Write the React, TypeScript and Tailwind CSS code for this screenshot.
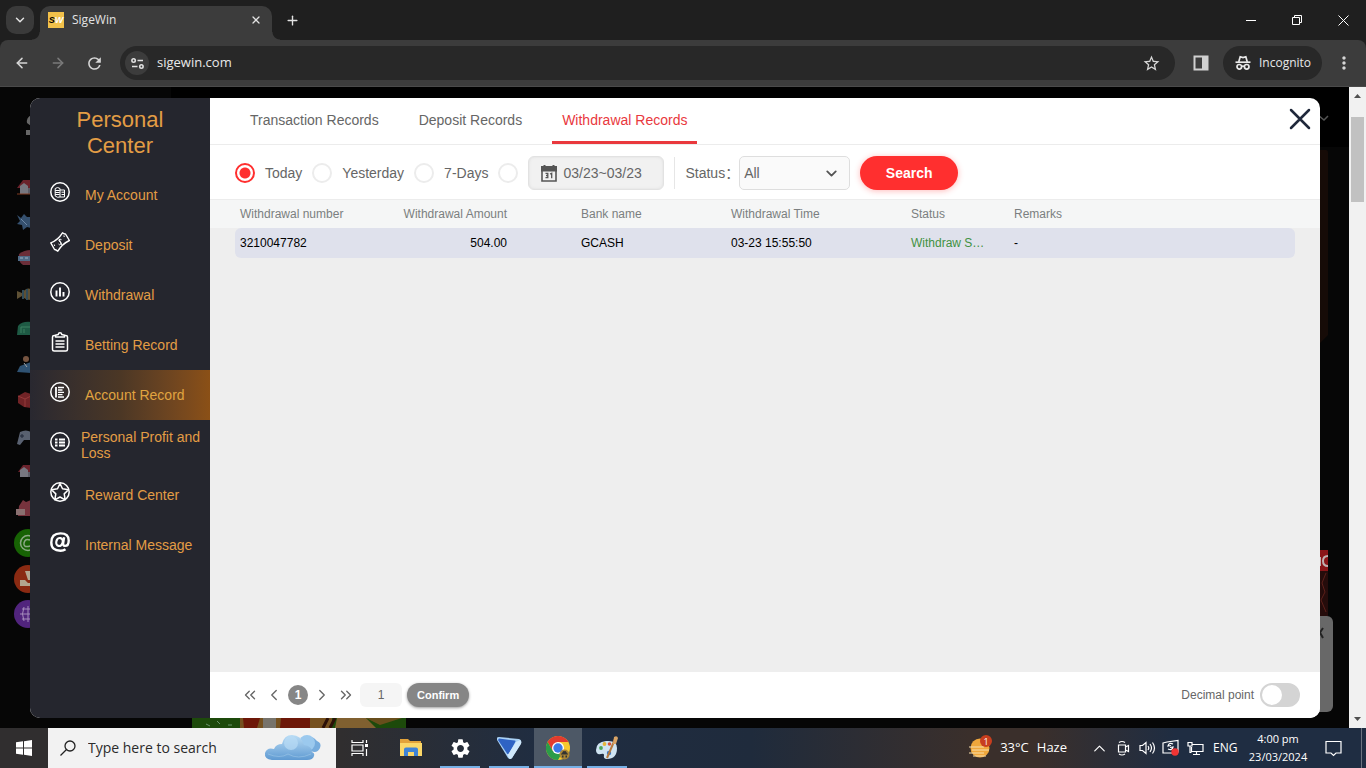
import { useState } from 'react'
import type { ReactNode } from 'react'
import { ArrowLeft, ArrowRight, ChevronDown, ChevronLeft, ChevronRight, ChevronsLeft, ChevronsRight, ChevronUp, Plus, X } from 'lucide-react'
import { MdMoreVert, MdRefresh, MdSettings, MdStarBorder } from 'react-icons/md'

interface WithdrawalRecord {
  number: string
  amount: string
  bank: string
  time: string
  status: string
  remarks: string
}

const RECORDS: WithdrawalRecord[] = [
  {
    number: '3210047782',
    amount: '504.00',
    bank: 'GCASH',
    time: '03-23 15:55:50',
    status: 'Withdraw S…',
    remarks: '-',
  },
]

const TABS = ['Transaction Records', 'Deposit Records', 'Withdrawal Records']
const RANGES = ['Today', 'Yesterday', '7-Days']

/* ---------- Browser chrome ---------- */

function TitleBar() {
  return (
    <div className="flex h-10 shrink-0 items-center bg-[#1f1f1f] pl-1.5 text-[#e3e3e3]">
      <button aria-label="Search tabs" className="flex size-7 items-center justify-center rounded-[10px] bg-[#3a3a3a]">
        <ChevronDown size={14} strokeWidth={2.5} />
      </button>
      <div className="relative ml-1.5 flex h-[34px] w-[232px] items-center self-end rounded-t-[10px] bg-[#3c3c3c] pr-2.5 pb-1.5 pl-2">
        <span className="absolute bottom-0 -left-2 size-2 bg-[radial-gradient(circle_at_0_0,#1f1f1f_7px,#3c3c3c_8px)]" />
        <span className="absolute -right-2 bottom-0 size-2 bg-[radial-gradient(circle_at_100%_0,#1f1f1f_7px,#3c3c3c_8px)]" />
        <span className="flex size-4 items-center justify-center bg-[#f2c14a] font-['Liberation_Sans'] text-[9px] leading-none font-bold text-black italic">
          S<span className="text-white">W</span>
        </span>
        <span className="ml-2 flex-1 text-xs">SigeWin</span>
        <button aria-label="Close tab">
          <X size={12} strokeWidth={2.5} />
        </button>
      </div>
      <button aria-label="New tab" className="ml-1.5 flex size-7 items-center justify-center">
        <Plus size={15} strokeWidth={2.2} />
      </button>
      <div className="ml-auto flex self-stretch">
        <button aria-label="Minimize" className="flex w-[46px] items-center justify-center">
          <svg width="10" height="10" stroke="#fff" fill="none"><path d="M0 5.5h10" /></svg>
        </button>
        <button aria-label="Restore" className="flex w-[46px] items-center justify-center">
          <svg width="10" height="10" stroke="#fff" fill="none"><path d="M.5 2.5h7v7h-7zM2.500 2.500v-2h7v7h-2" /></svg>
        </button>
        <button aria-label="Close" className="flex w-[46px] items-center justify-center">
          <svg width="11" height="11" stroke="#fff" fill="none"><path d="M.5.5l10 10M10.500.5l-10 10" /></svg>
        </button>
      </div>
    </div>
  )
}

function IncognitoIcon() {
  return (
    <svg width="16" height="16" viewBox="0 0 16 16" fill="none" stroke="#e8e8e8" strokeWidth="1.700">
      <path d="M0.500 7.200h15" />
      <path d="M3.700 7L5.200 1.800 8 2.500l2.800-.7L12.300 7" />
      <circle cx="4.300" cy="11.800" r="2.300" />
      <circle cx="11.700" cy="11.800" r="2.300" />
      <path d="M6.500 11.400q1.500-.8 3 0" />
    </svg>
  )
}

function Toolbar() {
  return (
    <div className="shrink-0 bg-[#1f1f1f]">
      <div className="flex h-[47px] items-center rounded-t-lg border-b border-[#4a4a4a] bg-[#3c3c3c] px-1 text-[#d6d6d6]">
        <button aria-label="Back" className="flex w-9 justify-center"><ArrowLeft size={16} strokeWidth={2.3} /></button>
        <button aria-label="Forward" className="flex w-9 justify-center text-[#7a7a7a]"><ArrowRight size={16} strokeWidth={2.3} /></button>
        <button aria-label="Reload" className="flex w-9 justify-center"><MdRefresh size={19} /></button>
        <div className="ml-2 flex h-[34px] flex-1 items-center rounded-full bg-[#282828] pr-3.5 pl-[5px]">
          <button aria-label="Site information" className="flex size-6 items-center justify-center rounded-full bg-[#3c3c3c]">
            <svg width="13" height="11" viewBox="0 0 13 11" fill="none" stroke="#e0e0e0" strokeWidth="1.600">
              <circle cx="2.600" cy="2.500" r="1.700" />
              <path d="M6.500 2.500H12M1 8.500h5.500" />
              <circle cx="10.400" cy="8.500" r="1.700" />
            </svg>
          </button>
          <input
            aria-label="Address"
            defaultValue="sigewin.com"
            className="ml-2 min-w-0 flex-1 bg-transparent text-[13px] text-[#e8e8e8] outline-none"
          />
          <button aria-label="Bookmark"><MdStarBorder size={19} /></button>
        </div>
        <button aria-label="Side panel" className="ml-2 flex w-9 justify-center">
          <svg width="16" height="16"><path d="M1.500 1.500h13v13h-13z" fill="none" stroke="#d0d0d0" strokeWidth="2" /><path d="M9 1h6v14H9z" fill="#d0d0d0" /></svg>
        </button>
        <button className="ml-1 flex h-[34px] w-[99px] items-center gap-2 rounded-full bg-[#282828] pl-3 text-xs text-[#e8e8e8]">
          <IncognitoIcon />
          Incognito
        </button>
        <button aria-label="Menu" className="ml-1 flex w-9 justify-center"><MdMoreVert size={20} /></button>
      </div>
    </div>
  )
}

function Scrollbar() {
  return (
    <div className="flex w-[17px] shrink-0 flex-col items-center bg-[#f1f1f1]">
      <svg width="17" height="17"><path d="M5 11l3.500-4 3.500 4z" fill="#505050" /></svg>
      <div className="mt-[13px] h-[85px] w-[13px] bg-[#c1c1c1]" />
      <svg className="mt-auto" width="17" height="17"><path d="M5 6l3.500 4L12 6z" fill="#505050" /></svg>
    </div>
  )
}

/* ---------- Dimmed site behind the dialog ---------- */

function Backdrop() {
  return (
    <div aria-hidden="true" className="absolute inset-0 overflow-hidden bg-[#060606]">
      <div className="absolute top-0 right-0 left-[171px] h-[60px] bg-black" />
      <svg className="absolute top-0 left-0" width="60" height="560" viewBox="0 87 60 560">
        <path d="M31 115q-5 3-4 8l4 3zM26 130h5v5h-5z" fill="#666" />
        {/* house */}
        <path d="M17 188l6-8h8v8z" fill="#6a222b" />
        <path d="M20 186l4-3 4 3v8h-8z" fill="#777780" />
        <path d="M28 188h3v6h-3z" fill="#5c5c66" />
        <path d="M17 194h14" stroke="#803a20" />
        {/* dragon */}
        <path d="M17 215l4 3 3-4 3 3h4v11l-4-1-4 3-1-5-5-1 3-3z" fill="#35506e" />
        <path d="M21 219l6 6" stroke="#6c86a4" />
        {/* slot machine */}
        <path d="M19 254q5-4 12-4v15h-8q-5-3-4-11z" fill="#6b2e39" />
        <path d="M18 256h13v5H18z" fill="#506b87" />
        <path d="M20 258h3m2 0h3" stroke="#9eb3c6" />
        {/* fish */}
        <path d="M17 291l5 2q4-6 9-4v11q-6 0-9-4l-5 3z" fill="#5e5034" />
        <path d="M23 290v9m4-10v11" stroke="#314b58" strokeWidth="2" />
        {/* cards */}
        <path d="M18 326q4-5 13-4v13H17z" fill="#1e5a44" />
        <path d="M21 333v-6h9M24 333v-4" stroke="#3c8060" fill="none" />
        {/* dealer */}
        <circle cx="26" cy="359" r="3" fill="#765440" />
        <path d="M17 372l3-6 11-4v11z" fill="#2f5272" />
        <path d="M24 363l3 4" stroke="#a3a3a3" />
        {/* dice */}
        <path d="M18 396l7-4 6 2v14l-7-1-6-4z" fill="#702326" />
        <path d="M18 396l7 3v8m0-8l6-3" stroke="#943a3a" fill="none" />
        {/* gamepad */}
        <path d="M17 444l3-12q6-3 11 0v8h-7l-4 5z" fill="#596170" />
        <path d="M20 436h4m-2-2v4" stroke="#202838" />
        {/* house */}
        <path d="M18 472l5-7h8v7z" fill="#6a222b" />
        <path d="M20 470l4-3 4 3v7h-8z" fill="#777780" />
        <path d="M28 472h3v5h-3z" fill="#5c5c66" />
        {/* gifts */}
        <path d="M19 506l4-6 3 2 5-2v16H18z" fill="#77333d" />
        <path d="M16 509h9v6h-9z" fill="#8a7070" />
        <circle cx="28" cy="543" r="14" fill="#176204" />
        <circle cx="28" cy="543" r="7.500" fill="none" stroke="#8aa884" strokeWidth="1.500" />
        <path d="M30 540q-5-2-6 3t6 3" fill="none" stroke="#8aa884" strokeWidth="1.500" />
        <circle cx="28" cy="579" r="14" fill="#8a2a12" />
        <path d="M20 580h5l3 3h3v3H20zM25 571h6v9h-3z" fill="#b3a68f" />
        <circle cx="28" cy="614" r="14" fill="#51247d" />
        <path d="M20 614h11M22 609h9M22 619h9M24 607q-3 7 0 14M28 606v16" stroke="#a58bbc" fill="none" />
      </svg>
      <svg className="absolute top-0 right-0" width="49" height="641" viewBox="1300 87 49 641">
        <path d="M1318 115l6 5 4-4" stroke="#555" strokeWidth="1.500" fill="none" />
        <path d="M1300 150h26q2 0 2 3v182l-8 8h-20z" fill="#160b07" />
        <path d="M1300 550h28v21h-28z" fill="#8a1518" />
        <path d="M1328 556q-5 0-5 5t5 5M1320 557v9" stroke="#bfb0b0" strokeWidth="2" fill="none" />
        <path d="M1300 571h28v45h-28z" fill="#250c0b" />
        <path d="M1326 573l-4 10 3 9-4 8 5 12" stroke="#5b1f19" fill="none" />
        <rect x="1300" y="616" width="33" height="96" rx="6" fill="#686868" />
        <path d="M1318 629l5 9m0-10l-6 9" stroke="#222" strokeWidth="2" />
      </svg>
      <svg className="absolute bottom-0 left-[192px]" width="214" height="10">
        <path d="M0 0h214v10H0z" fill="#1d4a0b" />
        <path d="M14 6l4 2M25 3l3 3M36 7h4" stroke="#6b936b" />
        <path d="M48 0h92v10H48z" fill="#75501f" />
        <path d="M51 0h17l-3 10H52zM89 0h29v10H88z" fill="#6d1708" />
        <path d="M71 0h13v10H71z" fill="#77736b" />
        <path d="M136 0l-5 10m12-10l-5 10" stroke="#2b1008" strokeWidth="3" />
        <path d="M145 0h29l10 10h-41z" fill="#806030" />
        <path d="M174 0h36l-22 7z" fill="#684e1c" />
      </svg>
    </div>
  )
}

/* ---------- Sidebar ---------- */

function RingIcon({ children }: { children?: ReactNode }) {
  return (
    <svg width="20" height="20" viewBox="0 0 20 20" fill="none" stroke="#fff">
      <circle cx="10" cy="10" r="9.200" strokeWidth="1.500" />
      {children}
    </svg>
  )
}

const MENU: { label: string; icon: ReactNode }[] = [
  {
    label: 'My Account',
    icon: (
      <RingIcon>
        <path d="M5.200 14V6.500q2.400-2 4.800 0V15q-2.500 1-4.800-1zM5.200 8.500h4.500M5.200 10.500h4.500M5.200 12.500h4.500M10 8h4.500v7H10M11.500 10.200h2.500M11.500 12.500h2.500" />
      </RingIcon>
    ),
  },
  {
    label: 'Deposit',
    icon: (
      <svg width="20" height="20" viewBox="0 0 20 20" fill="none" stroke="#fff" strokeWidth="1.400" strokeLinejoin="round">
        <path d="M.8 10.800Q8 8 12.500.8q1.500 1.500 3 1.200l3.900 6.500Q12 12 7.800 19.200 6 17.500 4.500 17.500z" />
        <path d="M11.500 7.700q-1.500-1-2.400.2t1.200 2 .5 2.200-2.300-.1M9 6.700l2.600 6.200" strokeWidth="1" />
        <path d="M13.300 4l1.600.3M4.300 12.500l.4 1.500" strokeWidth="1" />
      </svg>
    ),
  },
  {
    label: 'Withdrawal',
    icon: (
      <RingIcon>
        <path d="M6.500 14.500V8.500M10 14.500v-9M13.500 14.500V10" strokeWidth="1.900" />
      </RingIcon>
    ),
  },
  {
    label: 'Betting Record',
    icon: (
      <svg width="20" height="20" viewBox="0 0 20 20" fill="none" stroke="#fff" strokeWidth="1.500" strokeLinejoin="round">
        <path d="M5.500 3.500H4.200Q2.500 3.500 2.500 5v12.500q0 1.500 1.700 1.500h11.600q1.700 0 1.700-1.500V5q0-1.500-1.700-1.500h-1.300" />
        <path d="M5.500 5V3.200L8.200 2.500Q8.500.8 10 .8t1.800 1.700l2.700.7V5z" />
        <path d="M5.500 9h9M5.500 12h9M5.500 15h9" />
      </svg>
    ),
  },
  {
    label: 'Account Record',
    icon: (
      <RingIcon>
        <path d="M6 5v10.500" strokeWidth="1.800" />
        <path d="M8 5.500h6M8 8h4.500M8 10.300h6M8 12.600h4.500M8 15h6" strokeWidth="1.300" />
      </RingIcon>
    ),
  },
  {
    label: 'Personal Profit and Loss',
    icon: (
      <RingIcon>
        <path d="M5 7.500h2.500M5 10.500h2.500M5 13.500h2.500M9 7.500h6M9 10.500h6M9 13.500h6" strokeWidth="1.900" />
      </RingIcon>
    ),
  },
  {
    label: 'Reward Center',
    icon: (
      <RingIcon>
        <path d="M10 1.500l2.500 5.300 6 .9-4.300 4.200 1 5.900L10 15l-5.200 2.800 1-5.900L1.500 7.700l6-.9z" strokeWidth="1.500" strokeLinejoin="round" />
      </RingIcon>
    ),
  },
  {
    label: 'Internal Message',
    icon: (
      <svg width="20" height="20" viewBox="0 0 20 20" fill="none" stroke="#fff">
        <path d="M15.500 17.200Q13.500 18.700 10.500 18.700 1.300 18.700 1.300 10.500 1.300 1.400 10.500 1.400q8.200 0 8.200 7 0 5.500-3.800 5.500-2.200 0-1.700-3l.9-5.600" strokeWidth="2.400" />
        <ellipse cx="9.500" cy="10" rx="3.200" ry="4" strokeWidth="2.200" transform="rotate(14 9.500 10)" />
      </svg>
    ),
  },
]

function Sidebar() {
  const [active, setActive] = useState('Account Record')

  return (
    <nav className="w-[180px] shrink-0 bg-[#25262e] text-[#e39d45]">
      <h1 className="h-[72px] px-10 pt-[9px] text-center text-[22px] leading-[26px]">Personal Center</h1>
      {MENU.map((item) => (
        <button
          key={item.label}
          onClick={() => setActive(item.label)}
          className={`flex h-[50px] w-full items-center pl-5 text-left text-sm leading-4 ${
            active === item.label ? 'bg-linear-to-r from-[#292830] via-[#4b3725] to-[#8b5016] text-[#e0a440]' : ''
          }`}
        >
          <span className="shrink-0 pb-1.5">{item.icon}</span>
          <span className={item.label.length > 20 ? 'ml-[11px]' : 'ml-[15px]'}>{item.label}</span>
        </button>
      ))}
    </nav>
  )
}

/* ---------- Records panel ---------- */

function CalendarIcon() {
  return (
    <svg width="16" height="18" viewBox="0 0 16 18" fill="none" stroke="#555">
      <path d="M1 3h14v14H1z" strokeWidth="1.600" />
      <path d="M1 3h14v3.500H1zM3.500 1v3M12.500 1v3" strokeWidth="2" fill="#555" />
      <path d="M4.500 9.300h2.300v4.400H4.500M5 11.500h1.800M9 10l1.700-.7v5" strokeWidth="1.300" />
    </svg>
  )
}

const radioClass =
  'size-5 shrink-0 appearance-none rounded-full border-2 border-[#ececec] bg-white checked:border-[#ff2f2f] checked:bg-[radial-gradient(circle,#ff2f2f_5px,#fff_6px)]'

function Filters() {
  const [range, setRange] = useState('Today')

  return (
    <div className="flex h-[54px] items-center gap-2.5 px-[25px] pt-0.5 text-sm text-[#666]">
      {RANGES.map((label) => (
        <label key={label} className="flex items-center gap-2.5">
          <input type="radio" name="range" checked={range === label} onChange={() => setRange(label)} className={radioClass} />
          {label}
        </label>
      ))}
      <input
        type="radio"
        name="range"
        aria-label="Custom range"
        checked={range === 'custom'}
        onChange={() => setRange('custom')}
        className={radioClass}
      />
      <label className="flex h-[34px] w-[136px] items-center rounded-md border border-[#e2e2e2] bg-[#f1f1f1] pl-3 shadow-[inset_0_0_3px_#ddd]">
        <CalendarIcon />
        <input aria-label="Date range" defaultValue="03/23~03/23" className="ml-1.5 w-[90px] bg-transparent outline-none" />
      </label>
      <div className="flex items-center border-l border-[#e6e6e6] py-1.5 pl-2.5">
        <label htmlFor="status">Status：</label>
      </div>
      <div className="-ml-2.5 flex">
        <select id="status" className="h-[34px] w-[111px] appearance-none rounded-[5px] border border-[#dedede] bg-[#fafafa] pl-1">
          <option>All</option>
        </select>
        <ChevronDown size={17} strokeWidth={2.6} className="pointer-events-none mr-2.5 -ml-[27px] self-center text-[#555]" />
      </div>
      <button className="h-[34px] w-[98px] rounded-full bg-[#ff2f2f] font-bold text-white shadow-[0_1px_6px_#ff2f2f55]">
        Search
      </button>
    </div>
  )
}

function RecordsTable() {
  return (
    <div className="flex-1 overflow-hidden border-t border-[#ececec] bg-[#eee] px-[25px]">
      <table className="w-full table-fixed border-separate border-spacing-0 text-left text-xs">
        <colgroup>
          <col className="w-[158px]" />
          <col className="w-[119px]" />
          <col className="w-[214px]" />
          <col className="w-[180px]" />
          <col className="w-[103px]" />
          <col />
        </colgroup>
        <thead>
          <tr className="h-7 bg-[#f5f6f6] text-[#7b7f80] shadow-[-25px_0_0_#f5f6f6,25px_0_0_#f5f6f6] [&>th]:px-[5px] [&>th]:font-normal">
            <th>Withdrawal number</th>
            <th className="text-right">Withdrawal Amount</th>
            <th><span className="pl-16">Bank name</span></th>
            <th>Withdrawal Time</th>
            <th>Status</th>
            <th>Remarks</th>
          </tr>
        </thead>
        <tbody>
          {RECORDS.map((record) => (
            <tr key={record.number} className="h-[30px] text-black [&>td]:bg-[#dfe1ec] [&>td]:px-[5px]">
              <td className="rounded-l-md">{record.number}</td>
              <td className="text-right">{record.amount}</td>
              <td><span className="pl-16">{record.bank}</span></td>
              <td>{record.time}</td>
              <td className="text-[#3f9142]">{record.status}</td>
              <td className="rounded-r-md">{record.remarks}</td>
            </tr>
          ))}
        </tbody>
      </table>
    </div>
  )
}

function Pagination() {
  return (
    <div className="flex h-[46px] shrink-0 items-center bg-white pr-5 pl-7 text-xs text-[#666]">
      <button aria-label="First page" className="flex w-6 justify-center"><ChevronsLeft size={18} strokeWidth={1.8} /></button>
      <button aria-label="Previous page" className="flex w-6 justify-center"><ChevronLeft size={18} strokeWidth={1.8} /></button>
      <button className="mx-0.5 flex size-5 items-center justify-center rounded-full bg-[#868686] font-bold text-white">1</button>
      <button aria-label="Next page" className="flex w-6 justify-center"><ChevronRight size={18} strokeWidth={1.8} /></button>
      <button aria-label="Last page" className="flex w-6 justify-center"><ChevronsRight size={18} strokeWidth={1.8} /></button>
      <input aria-label="Page" defaultValue="1" className="ml-0.5 h-6 w-[42px] rounded-md bg-[#f5f5f5] text-center outline-none" />
      <button className="ml-[5px] h-6 rounded-full bg-[#868686] px-2.5 text-[11px] font-bold text-white shadow-[0_1px_3px_#999]">Confirm</button>
      <label className="ml-auto flex items-center gap-1.5">
        Decimal point
        <input
          type="checkbox"
          className="h-6 w-10 appearance-none rounded-full border-2 border-[#d4d4d4] bg-[#d4d4d4] before:block before:size-5 before:rounded-full before:bg-white checked:before:ml-4"
        />
      </label>
    </div>
  )
}

function PersonalCenter() {
  const [tab, setTab] = useState('Withdrawal Records')

  return (
    <div role="dialog" aria-label="Personal Center" className="relative flex w-full overflow-hidden rounded-[10px] bg-white font-['Liberation_Sans','Noto_Sans_CJK_SC',sans-serif]">
      <Sidebar />
      <section className="flex min-w-0 flex-1 flex-col">
        <div className="flex h-[47px] shrink-0 items-stretch gap-5 border-b border-[#ececec] pr-2 pl-[30px] text-sm text-[#666]">
          {TABS.map((label) => (
            <button
              key={label}
              onClick={() => setTab(label)}
              className={`border-b-[3px] px-2.5 ${tab === label ? 'border-[#e9383d] text-[#e9383d]' : 'border-transparent'}`}
            >
              {label}
            </button>
          ))}
          <button aria-label="Close dialog" className="ml-auto self-center pb-1 text-[#20293b]">
            <svg width="24" height="22" stroke="currentColor" strokeWidth="2.500" strokeLinecap="round">
              <path d="M3 2l18 18M21 2L3 20" />
            </svg>
          </button>
        </div>
        <Filters />
        <RecordsTable />
        <Pagination />
      </section>
    </div>
  )
}

/* ---------- Taskbar ---------- */

function CloudIcon() {
  return (
    <svg width="58" height="28" viewBox="0 0 58 28">
      <defs>
        <linearGradient id="cloud" x1="0" y1="0" x2="0" y2="1">
          <stop offset="0" stopColor="#b9dcf5" />
          <stop offset="1" stopColor="#5f9ad2" />
        </linearGradient>
      </defs>
      <path d="M33 14a11 10 0 0 1 20-7q5 2 3 7-3 6-9 3-7 4-14-3z" fill="#76acdd" />
      <circle cx="43" cy="9" r="8" fill="#9bc9ee" />
      <path d="M8 26q-8-1-7-7 2-6 9-4 2-5 8-5Q20 1 28 1q9 0 12 10 8 1 8 7 3 1 2 4-1 4-7 4z" fill="url(#cloud)" />
      <circle cx="27" cy="9" r="7" fill="#b9dcf5" opacity=".7" />
      <path d="M4 20q12 5 20 0 10 6 23 0" stroke="#b5d7f1" fill="none" opacity=".4" />
    </svg>
  )
}

function TaskViewIcon() {
  return (
    <svg width="18" height="16" fill="none" stroke="#fff" strokeWidth="1.200">
      <path d="M1 0v2.500h11V0M1 5h11v6H1zM1 16v-2.500h11V16M15.500 0v3M15.500 9v7" />
      <path d="M14 4h3v3h-3z" fill="#fff" stroke="none" />
    </svg>
  )
}

function ExplorerIcon() {
  return (
    <svg width="22" height="20" viewBox="0 0 22 20">
      <path d="M0 1h8l2 2h11v15H0z" fill="#e3a33a" />
      <path d="M0 5h22v13H0z" fill="#fbd768" />
      <path d="M4 18V11.500q0-2 2-2h10q2 0 2 2V18h-4v-4H8v4z" fill="#3f83d6" />
    </svg>
  )
}

function VpnIcon() {
  return (
    <svg width="26" height="22" viewBox="0 0 26 22">
      <path d="M1 1q0-1 2-1l20 2q3 1 2 4l-9 15q-2 2-4 0L1 3z" fill="#a9d1f5" />
      <path d="M3 1.500l16 2q1 0 0 2l-6 11q-1 2-2 0L2 3z" fill="#2f63c4" />
      <path d="M20 5l4-2q2 1 1 4l-9 14q-2 2-3 0l-2-4q1 1 2-1z" fill="#d0e8fb" />
    </svg>
  )
}

function ChromeIcon() {
  return (
    <svg width="24" height="24" viewBox="0 0 24 24">
      <circle cx="12" cy="12" r="12" fill="#f7c92f" />
      <path d="M1.600 6A12 12 0 0 1 22.400 6H12L6.800 15z" fill="#e33b2e" />
      <path d="M1.600 6A12 12 0 0 0 12 24l5.200-9L6.800 15z" fill="#2b9c48" />
      <circle cx="12" cy="12" r="6" fill="#fff" />
      <circle cx="12" cy="12" r="4.700" fill="#3b78e7" />
      <circle cx="18.500" cy="18.500" r="5" fill="#a98535" />
      <path d="M15 18h7M16.500 18l.6-2.300h2.800l.6 2.300" stroke="#333" fill="#333" />
      <path d="M16 20.500h1.500m2 0H21" stroke="#333" strokeWidth="2" />
    </svg>
  )
}

function PaintIcon() {
  return (
    <svg width="24" height="24" viewBox="0 0 24 24">
      <path d="M1 14Q1 6 11 5q11-1 11 7 0 11-10 11-4 0-3-4 0-2-3-1-5 1-5-4z" fill="#cfe4f2" />
      <circle cx="6" cy="12" r="1.900" fill="#4ba45a" />
      <circle cx="9.500" cy="8" r="1.900" fill="#e7b63a" />
      <circle cx="14.500" cy="8" r="1.800" fill="#d5533b" />
      <circle cx="14" cy="17" r="2.200" fill="#3978c8" />
      <path d="M20.500 2L12 22" stroke="#b67a3e" strokeWidth="2" />
      <path d="M19 1q3-2 4 1l-2 6h-3z" fill="#d9a466" />
    </svg>
  )
}

const APPS: { name: string; icon: ReactNode; open: boolean; focused?: boolean }[] = [
  { name: 'File Explorer', icon: <ExplorerIcon />, open: false },
  { name: 'Settings', icon: <MdSettings size={23} color="#fff" />, open: true },
  { name: 'VPN', icon: <VpnIcon />, open: true },
  { name: 'Chrome', icon: <ChromeIcon />, open: true, focused: true },
  { name: 'Paint', icon: <PaintIcon />, open: true },
]

function Taskbar() {
  return (
    <footer className="flex h-10 shrink-0 items-stretch bg-[linear-gradient(to_right,#302e2f_25%,#1f2d42_40%,#1f2b3c_55%,#3a2f2b_71%,#3a2f2b_76%,#1f2d42_86%)] text-white">
      <button aria-label="Start" className="flex w-12 items-center justify-center">
        <svg width="16" height="16" fill="#fff">
          <path d="M0 2.300L7 1.300v6.200H0zM8 1.200L16 0v7.500H8zM0 8.500h7v6.200l-7-1zM8 8.500h8V16l-8-1.200z" />
        </svg>
      </button>
      <label className="flex w-72 items-center bg-[#f2f2f2] pr-3.5 pl-3 text-[#222]">
        <svg width="16" height="16" fill="none" stroke="#222" strokeWidth="1.300">
          <circle cx="10" cy="6" r="5" />
          <path d="M6.500 9.500L.500 15.500" />
        </svg>
        <input
          aria-label="Search"
          placeholder="Type here to search"
          className="ml-3 min-w-0 flex-1 bg-transparent text-sm outline-none placeholder:text-[#2b2b2b]"
        />
        <CloudIcon />
      </label>
      <button aria-label="Task view" className="mr-[3px] flex w-12 items-center justify-center"><TaskViewIcon /></button>
      <div className="flex gap-px">
        {APPS.map((app) => (
          <button
            key={app.name}
            aria-label={app.name}
            className={`flex w-12 flex-col items-center ${app.focused ? 'bg-[#4d5866]' : ''}`}
          >
            <span className="flex flex-1 items-center">{app.icon}</span>
            {app.open && <span className={`-mt-0.5 h-0.5 bg-[#76b0e6] ${app.focused ? 'w-12' : 'w-10'}`} />}
          </button>
        ))}
      </div>
      <div className="flex flex-1 items-center justify-end">
        <button className="mr-5 flex items-center gap-2 text-[13px]">
          <span className="relative">
            <svg width="24" height="22" viewBox="0 0 24 22">
              <circle cx="12" cy="11" r="9.500" fill="#f0a73c" />
              <path d="M1 10h15M4 13h17M1 16h15M5 19h13" stroke="#f7dfad" strokeWidth="1.200" />
            </svg>
            <span className="absolute -top-0.5 right-0 flex size-3 items-center justify-center rounded-full bg-[#c83e1e] text-[9px] leading-none">1</span>
          </span>
          <span>33°C</span>
          <span>Haze</span>
        </button>
        <button aria-label="Show hidden icons" className="flex w-6 justify-center"><ChevronUp size={19} strokeWidth={1.5} /></button>
        <span className="flex w-6 justify-center">
          <svg width="14" height="16" fill="none" stroke="#fff" strokeWidth="1.200">
            <path d="M2.500 5h7v7h-7zM9.500 7l3-1.500v6l-3-1.500M3 2.500q3-2 6 0M3 14q3 2 6 0" />
          </svg>
        </span>
        <span className="flex w-6 justify-center">
          <svg width="17" height="16" fill="none" stroke="#fff" strokeWidth="1.200">
            <path d="M1 5.500h2.500L7 2.500v11l-3.500-3H1zM9 6q1.500 2 0 4M11 4q3 4 0 8M13.500 2.500q4 5.500 0 11" />
          </svg>
        </span>
        <span className="flex w-6 justify-center">
          <svg width="18" height="18" fill="none" stroke="#fff" strokeWidth="1.200">
            <path d="M1 4l4-1 11-1.500V13l-3 1H1zM11 5q-4-2-5 2l3-.500M6 10q4 2 5-2l-3 .5" />
            <circle cx="13" cy="13" r="3.700" fill="#f03434" stroke="none" />
          </svg>
        </span>
        <span className="flex w-6 justify-center">
          <svg width="17" height="15" fill="none" stroke="#fff" strokeWidth="1.200">
            <path d="M5 3.500h11v7H4.500V6M9.500 10.500v3M6 13.500h7M1 1.500h4V5H1zM3 5v6.500h1.500" />
          </svg>
        </span>
        <span className="w-[38px] pl-1.5 text-xs">ENG</span>
        <time className="w-[66px] text-center text-[11px] leading-[18px]">
          4:00 pm
          <br />
          23/03/2024
        </time>
        <button aria-label="Notifications" className="flex w-11 justify-center">
          <svg width="17" height="17" fill="none" stroke="#fff" strokeWidth="1.200"><path d="M1 1.500h15V13h-5l-2.500 2.500L6 13H1z" /></svg>
        </button>
        <button aria-label="Show desktop" className="ml-1.5 w-[5px] self-stretch border-l border-[#6b7480]" />
      </div>
    </footer>
  )
}

export default function App() {
  return (
    <div className="flex h-screen flex-col overflow-hidden bg-black font-['Open_Sans',sans-serif]">
      <TitleBar />
      <Toolbar />
      <main className="flex min-h-0 flex-1">
        <div className="relative flex min-w-0 flex-1 pt-[11px] pr-[29px] pb-2.5 pl-[30px]">
          <Backdrop />
          <PersonalCenter />
        </div>
        <Scrollbar />
      </main>
      <Taskbar />
    </div>
  )
}
